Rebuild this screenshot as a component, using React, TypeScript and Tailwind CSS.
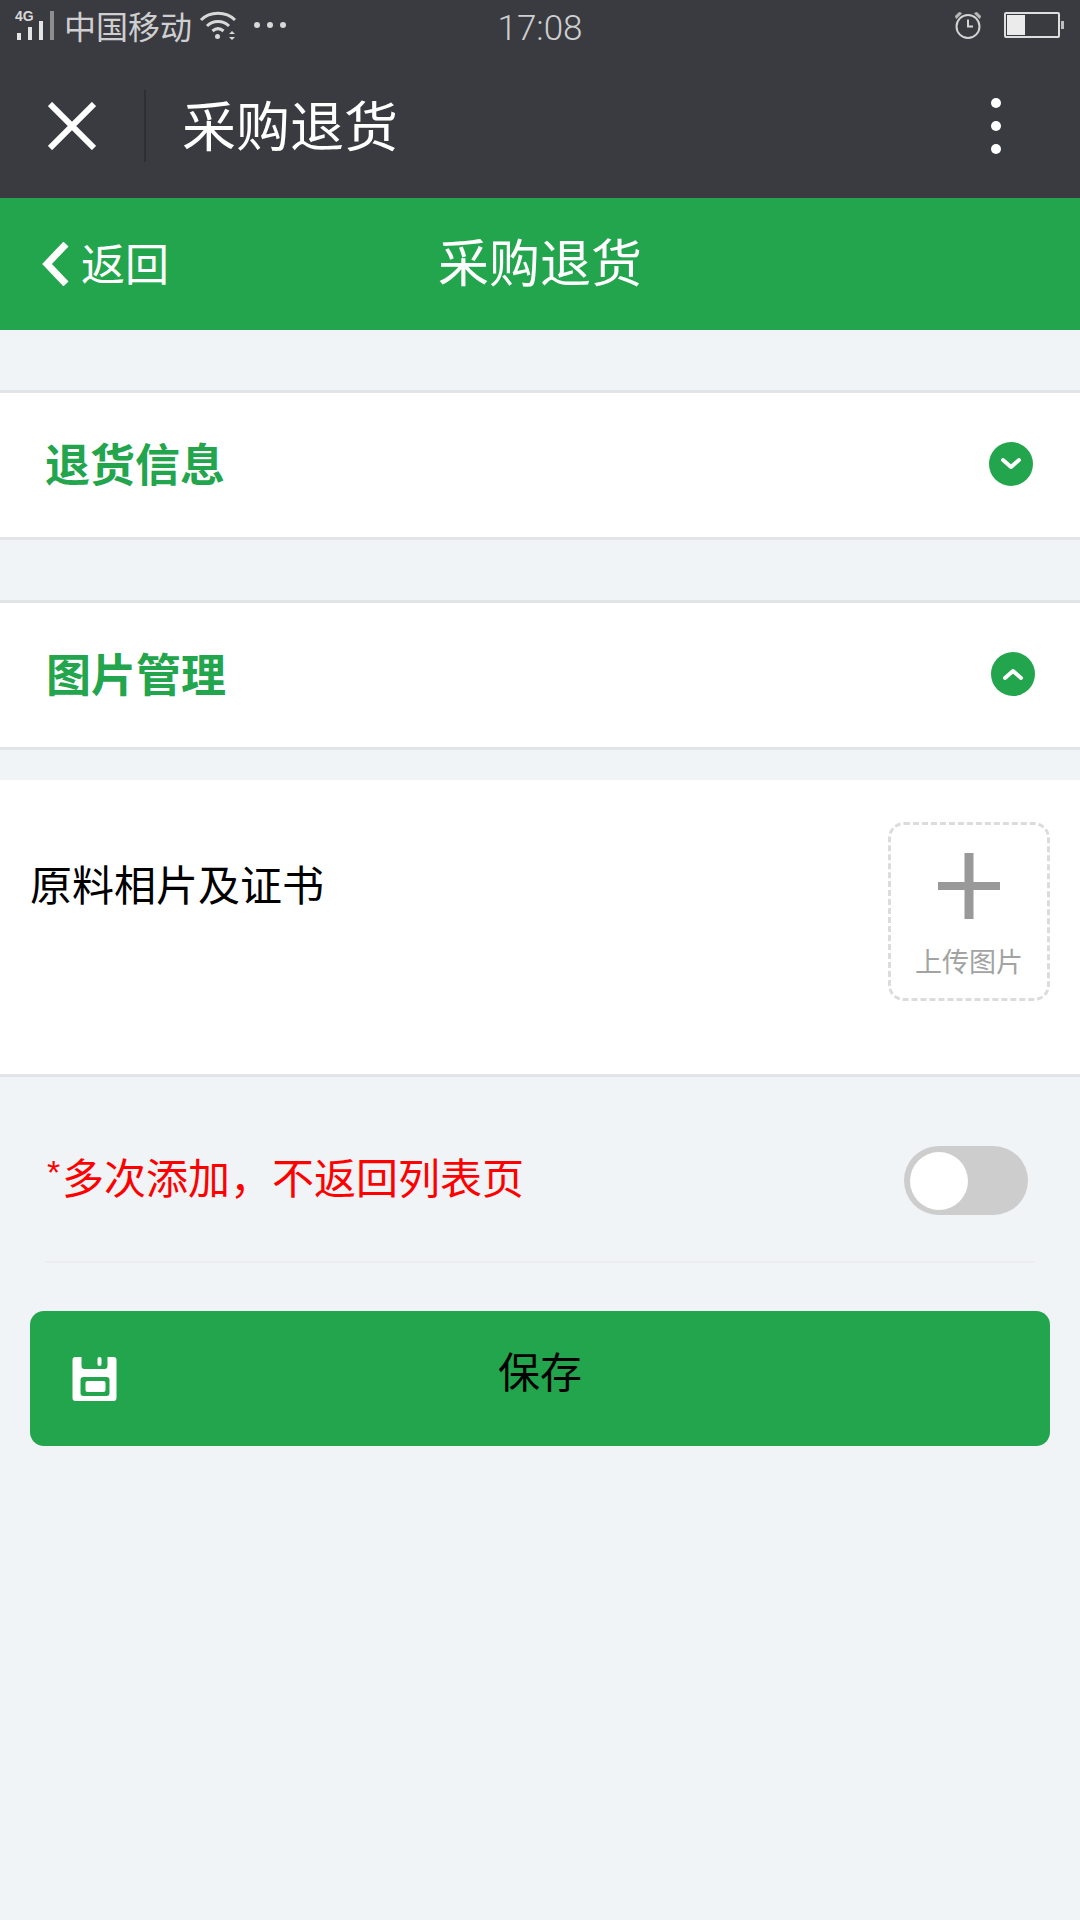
const FONT = "font-['Noto_Sans_CJK_SC','Noto_Sans',sans-serif]";

const StatusBar = () => (
  <div className="flex h-[50px] items-center justify-between text-[#cfcfd1]">
    <div className="flex items-center">
      {/* signal */}
      <svg width="42" height="32" viewBox="0 0 42 32" className="ml-[15px]">
        <text x="0" y="12" fontSize="14" fontWeight="700" fontFamily="Liberation Sans" fill="#d8d8d8">4G</text>
        <rect x="2" y="24" width="4" height="7" fill="#e4e4e4" />
        <rect x="13" y="18" width="4" height="13" fill="#e4e4e4" />
        <rect x="24" y="12" width="4" height="19" fill="#e4e4e4" />
        <rect x="35" y="2" width="4" height="29" fill="#8e8e90" />
      </svg>
      <span className="ml-[7px] text-[32px] leading-none">中国移动</span>
      {/* wifi */}
      <svg width="38" height="30" viewBox="0 0 38 30" className="ml-[7px]" fill="none" stroke="#d8d8d8" strokeWidth="3">
        <path d="M2 10 C11 1 27 1 36 10" />
        <path d="M8 16 C14 10 24 10 30 16" />
        <path d="M13.500 21 C17 18 21 18 24.500 21" />
        <circle cx="18.500" cy="26.500" r="2.500" fill="#d8d8d8" stroke="none" />
        <path d="M30 24 h6 l-3 -3 z M30 27 h6 l-3 3 z" fill="#d8d8d8" stroke="none" />
      </svg>
      <div className="ml-[17px] flex gap-[7px]">
        <span className="h-[6px] w-[6px] rounded-full bg-[#d8d8d8]" />
        <span className="h-[6px] w-[6px] rounded-full bg-[#d8d8d8]" />
        <span className="h-[6px] w-[6px] rounded-full bg-[#d8d8d8]" />
      </div>
    </div>
    <span className="absolute left-0 right-0 mt-[6px] text-center font-['Roboto',sans-serif] text-[35px] font-light leading-none text-[#cfcfd1]">
      17:08
    </span>
    <div className="relative flex items-center">
      {/* alarm */}
      <svg width="28" height="28" viewBox="0 0 28 28" fill="none" stroke="#d4d4d4" strokeWidth="2">
        <circle cx="14" cy="15.500" r="11.500" />
        <path d="M14 8.500 V15.500 H19" />
        <path d="M1 5 L5 1 Q7.500 1 8 2.500 L2.500 8 Q1 7 1 5 Z" fill="#b5b5b5" stroke="none" />
        <path d="M27 5 L23 1 Q20.500 1 20 2.500 L25.500 8 Q27 7 27 5 Z" fill="#b5b5b5" stroke="none" />
      </svg>
      {/* battery */}
      <div className="ml-[22px] flex h-[26px] w-[56px] rounded-[2px] border-2 border-[#dedede] p-[1px]">
        <div className="h-full w-[18px] bg-[#ebebeb]" />
      </div>
      <div className="ml-[1px] mr-[16px] h-[8px] w-[3px] bg-[#bdbdbd]" />
    </div>
  </div>
);

const TitleBar = () => (
  <div className="flex h-[148px] items-center">
    <svg width="48" height="48" viewBox="0 0 48 48" className="ml-[48px] mt-[4px]" stroke="#fff" strokeWidth="6">
      <path d="M2 2 L46 46 M46 2 L2 46" />
    </svg>
    <div className="ml-[48px] mt-[4px] h-[72px] w-[2px] bg-[#2e2f33]" />
    <span className="ml-[36px] text-[54px] leading-none text-white">采购退货</span>
    <div className="ml-auto mr-[79px] mt-[4px] flex flex-col gap-[13px]">
      <span className="h-[10px] w-[10px] rounded-full bg-white" />
      <span className="h-[10px] w-[10px] rounded-full bg-white" />
      <span className="h-[10px] w-[10px] rounded-full bg-white" />
    </div>
  </div>
);

const Section = ({ title, up }: { title: string; up?: boolean }) => (
  <div className={`flex h-[150px] items-center justify-between border-y-[3px] border-[#e2e5e8] bg-white ${up ? "pl-[46px] pr-[45px]" : "pl-[45px] pr-[47px]"}`}>
    <span className="-mt-[6px] text-[45px] font-bold leading-none text-[#22a54c]">{title}</span>
    <svg width="44" height="44" viewBox="0 0 44 44" className="-mt-[2px]">
      <circle cx="22" cy="22" r="22" fill="#22a54c" />
      <path d={up ? "M14 26 L22 19 L30 26" : "M14 18 L22 25 L30 18"} fill="none" stroke="#fff" strokeWidth="4" strokeLinecap="round" strokeLinejoin="round" />
    </svg>
  </div>
);

export default function App() {
  return (
    <div className={`relative flex min-h-[1920px] w-[1080px] flex-col bg-[#f0f4f7] ${FONT}`}>
      <header className="bg-[#3a3b40]">
        <StatusBar />
        <TitleBar />
      </header>

      <div className="relative flex h-[132px] items-center bg-[#22a54c] text-white">
        <svg width="28" height="44" viewBox="0 0 28 44" className="ml-[41px]" fill="none" stroke="#fff" strokeWidth="7">
          <path d="M25 2 L6 22 L25 42" />
        </svg>
        <span className="ml-[12px] -mt-[5px] text-[44px] leading-none">返回</span>
        <span className="absolute left-0 right-0 -mt-[7px] text-center text-[51px] leading-none">采购退货</span>
      </div>

      <div className="mt-[60px]">
        <Section title="退货信息" />
      </div>
      <div className="mt-[60px]">
        <Section title="图片管理" up />
      </div>

      <div className="mt-[30px] flex h-[297px] justify-between border-b-[3px] border-[#e2e5e8] bg-white pl-[30px] pr-[30px] pt-[42px]">
        <span className="mt-[40px] text-[42px] leading-none text-black">原料相片及证书</span>
        <div className="flex h-[179px] w-[162px] flex-col items-center rounded-[16px] border-[3px] border-dashed border-[#dcdcdc] pt-[28px]">
          <svg width="62" height="66" viewBox="0 0 62 66" fill="#999">
            <rect x="26.500" y="0" width="9" height="66" />
            <rect x="0" y="29" width="62" height="8" />
          </svg>
          <span className="mt-[28px] text-[27px] leading-none text-[#a3a3a3]">上传图片</span>
        </div>
      </div>

      <div className="mx-[45px] mt-[69px] flex items-center justify-between border-b-[2px] border-[#ebecee] pb-[46px]">
        <span className="-mt-[10px] flex items-start leading-[70px] text-[#ff0000]">
          <span className="-mt-[4px] ml-[2px] w-[15px] font-['Liberation_Sans',sans-serif] text-[34px] font-normal">*</span>
          <span className="text-[42px]">多次添加，不返回列表页</span>
        </span>
        <div className="mr-[7px] flex h-[69px] w-[124px] items-center rounded-full bg-[#cdcdcd] pl-[6px]">
          <div className="h-[58px] w-[58px] rounded-full bg-white" />
        </div>
      </div>

      <button className="relative mx-[30px] mt-[48px] flex h-[135px] items-center justify-center rounded-[14px] bg-[#22a54c]">
        <svg width="45" height="44" viewBox="0 0 44 44" className="absolute left-[42px] top-[46px]">
          <path
            fill="#fff"
            fillRule="evenodd"
            d="M3 0 H9 V9 Q9 12 12 12 H32 Q35 12 35 9 V0 H41 Q44 0 44 3 V41 Q44 44 41 44 H3 Q0 44 0 41 V3 Q0 0 3 0 Z M11 20 Q8 20 8 23 V36 Q8 39 11 39 H34 Q37 39 37 36 V23 Q37 20 34 20 Z"
          />
          <rect x="13" y="24" width="20" height="11" rx="2" fill="#fff" />
          <rect x="25" y="0" width="4" height="9" rx="2" fill="#fff" />
        </svg>
        <span className="-mt-[18px] text-[42px] leading-none text-black">保存</span>
      </button>
    </div>
  );
}
